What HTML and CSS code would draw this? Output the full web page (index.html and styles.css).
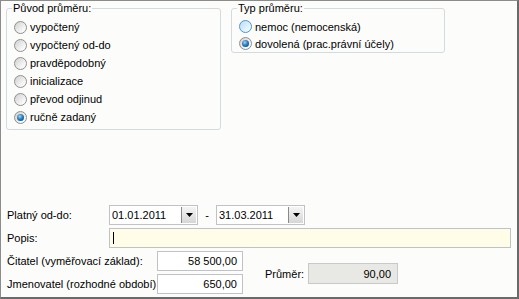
FILE: index.html
```html
<!DOCTYPE html>
<html lang="cs">
<head>
    <meta charset="UTF-8">
    <title>Průměr</title>
    <link rel="stylesheet" href="styles.css">
</head>
<body>

    <div class="window">
        <div class="groups">
            <fieldset class="group group-origin">
                <legend>Původ průměru:</legend>
                <label class="option"><span class="radio"></span>vypočtený</label>
                <label class="option"><span class="radio"></span>vypočtený od-do</label>
                <label class="option"><span class="radio"></span>pravděpodobný</label>
                <label class="option"><span class="radio"></span>inicializace</label>
                <label class="option"><span class="radio"></span>převod odjinud</label>
                <label class="option"><span class="radio checked"></span>ručně zadaný</label>
            </fieldset>

            <fieldset class="group group-type">
                <legend>Typ průměru:</legend>
                <label class="option"><span class="radio hot"></span>nemoc (nemocenská)</label>
                <label class="option"><span class="radio checked"></span>dovolená (prac.právní účely)</label>
            </fieldset>
        </div>

        <div class="form">
            <div class="row">
                <span class="label">Platný od-do:</span>
                <div class="field combo">
                    <span class="combo-value">01.01.2011</span>
                    <span class="combo-btn"><svg width="7" height="4" viewBox="0 0 7 4"><path d="M0 0h7L3.5 4z" fill="#000"/></svg></span>
                </div>
                <span class="dash">-</span>
                <div class="field combo">
                    <span class="combo-value">31.03.2011</span>
                    <span class="combo-btn"><svg width="7" height="4" viewBox="0 0 7 4"><path d="M0 0h7L3.5 4z" fill="#000"/></svg></span>
                </div>
            </div>

            <div class="row">
                <span class="label">Popis:</span>
                <div class="field note"><span class="caret"></span></div>
            </div>

            <div class="row split">
                <div class="amounts">
                    <div class="row">
                        <span class="label wide">Čitatel (vyměřovací základ):</span>
                        <div class="field num">58 500,00</div>
                    </div>
                    <div class="row">
                        <span class="label wide">Jmenovatel (rozhodné období)</span>
                        <div class="field num">650,00</div>
                    </div>
                </div>
                <div class="average">
                    <span class="average-label">Průměr:</span>
                    <div class="field num readonly">90,00</div>
                </div>
            </div>
        </div>
    </div>

</body>
</html>
```

FILE: styles.css
```css
body {
    margin: 0;
    font-family: 'Liberation Sans', Arial, sans-serif;
    font-size: 11px;
    color: #000;
    background: #fcfcfa;
}

/* Window frame */
.window {
    width: 519px;
    height: 299px;
    box-sizing: border-box;
    border-top: 1px solid #8c8c8c;
    border-left: 1px solid #8c8c8c;
    border-right: 2px solid #6a6a6a;
    border-bottom: 2px solid #6a6a6a;
    background: #fcfcfa;
    display: flex;
    flex-direction: column;
}

/* Radio groups */
.groups {
    display: flex;
    align-items: flex-start;
    gap: 10px;
    padding: 1px 0 0 5px;
}

.group {
    margin: 0;
    padding: 3px 3px 3px 7px;
    border: 1px solid #d3dbe1;
    border-radius: 3px;
    box-sizing: border-box;
}

.group legend {
    padding: 0 1px;
    margin-left: -2px;
    line-height: 13px;
}

.group-origin {
    width: 215px;
}

.group-type {
    width: 214px;
    padding-bottom: 0;
}

.option {
    display: flex;
    align-items: center;
    gap: 3px;
    height: 18px;
}

.group-type .option {
    height: 17px;
}

.radio {
    width: 13px;
    height: 13px;
    box-sizing: border-box;
    border-radius: 50%;
    border: 1px solid #8e8f8f;
    background: linear-gradient(135deg, #d0d0d0, #f6f6f6 70%, #ffffff);
    display: flex;
    align-items: center;
    justify-content: center;
}

.radio.hot {
    border-color: #4f94c9;
    background: linear-gradient(135deg, #b6def7, #e6f5fe 70%, #f4fbff);
}

.radio.checked::after {
    content: "";
    width: 7px;
    height: 7px;
    border-radius: 50%;
    background: radial-gradient(circle at 40% 35%, #9ad8ff, #2a7fc0 45%, #0e2f55);
}

/* Form rows */
.form {
    margin-top: auto;
    padding: 0 6px 3px 6px;
    display: flex;
    flex-direction: column;
    gap: 3px;
}

.row {
    display: flex;
    align-items: center;
}

.label {
    width: 102px;
    flex-shrink: 0;
}

.label.wide {
    width: 150px;
}

.field {
    height: 20px;
    box-sizing: border-box;
    border: 1px solid #bfc3c8;
    background: #fff;
    display: flex;
    align-items: center;
    padding: 0 5px 0 3px;
}

.combo {
    width: 89px;
    padding: 1px 1px 1px 2px;
    align-items: stretch;
}

.combo-value {
    flex: 1;
    display: flex;
    align-items: center;
}

.combo-btn {
    width: 14px;
    border-left: 1px solid #8a8a8a;
    background: linear-gradient(#f4f4f4, #d6d6d6);
    display: flex;
    align-items: center;
    justify-content: center;
}

.dash {
    width: 18px;
    text-align: center;
}

.note {
    flex: 1;
    background: #fffde8;
}

.caret {
    width: 1px;
    height: 12px;
    background: #000;
}

.num {
    width: 86px;
    justify-content: flex-end;
}

.split {
    align-items: center;
}

.amounts {
    display: flex;
    flex-direction: column;
    gap: 3px;
}

.average {
    display: flex;
    align-items: center;
    margin-left: 22px;
    margin-top: 2px;
}

.average-label {
    width: 43px;
}

.readonly {
    width: 90px;
    height: 21px;
    padding-right: 6px;
    background: #e8e8e4;
    border-color: #c9c9c9;
}
```
